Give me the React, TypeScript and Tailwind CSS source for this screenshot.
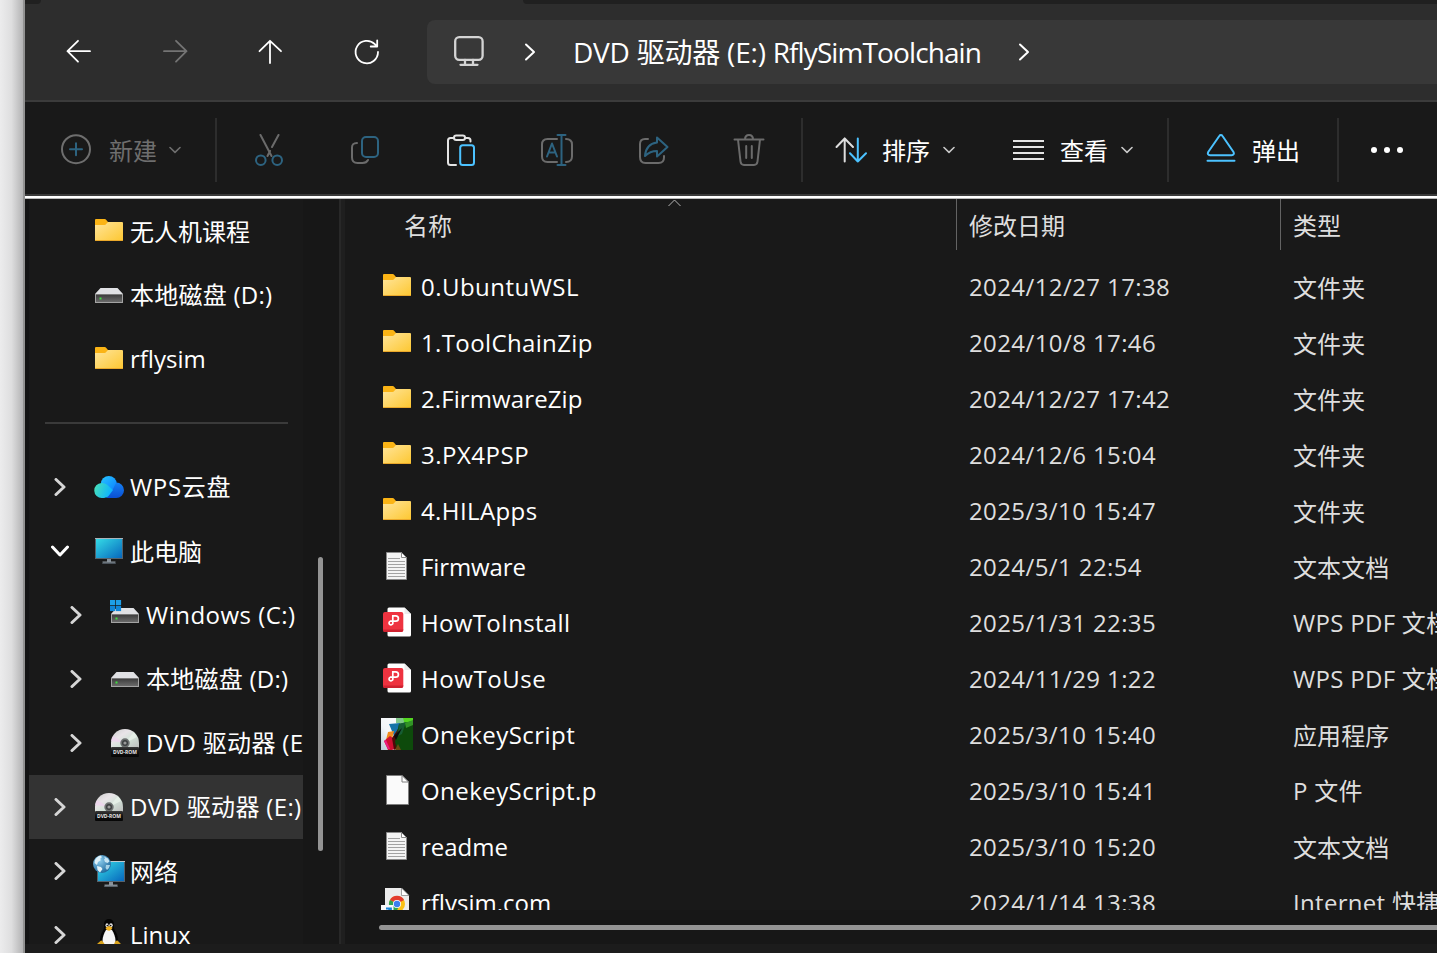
import React from "react";

type IconProps = { className?: string };

const Svg = ({ children, className = "" }: { children: React.ReactNode; className?: string }) => (
  <svg viewBox="0 0 32 32" fill="none" className={`h-8 w-8 shrink-0 ${className}`}>
    {children}
  </svg>
);

/* ---------- file and device icons ---------- */

const FolderIcon = () => (
  <Svg>
    <defs>
      <linearGradient id="folderFront" x1="0" y1="0" x2="1" y2="1">
        <stop offset="0" stopColor="#ffe59b" />
        <stop offset="1" stopColor="#fdc730" />
      </linearGradient>
    </defs>
    <path d="M2 5a1 1 0 0 1 1-1h8.600c.8 0 1.200.3 1.700.9L15 7v4H2z" fill="#fbb415" />
    <path d="M2 10h9.500c.8 0 1.200-.3 1.700-.9L15 7h14a1 1 0 0 1 1 1v17a1 1 0 0 1-1 1H3a1 1 0 0 1-1-1z" fill="url(#folderFront)" />
    <path d="M2 25h28a1 1 0 0 1-1 1H3a1 1 0 0 1-1-1z" fill="#eaa82a" />
  </Svg>
);

const DriveShape = () => (
  <>
    <defs>
      <linearGradient id="driveBody" x1="0" y1="0" x2="0" y2="1">
        <stop offset="0" stopColor="#3c3c3c" />
        <stop offset="1" stopColor="#6a6a6a" />
      </linearGradient>
    </defs>
    <path d="M7.500 9h17L30 15H2z" fill="#e0e1e4" />
    <rect x="2" y="15" width="28" height="9" fill="#a3a3a3" />
    <rect x="3" y="15.600" width="26" height="7.400" fill="url(#driveBody)" />
    <rect x="6.500" y="18.500" width="2" height="2" fill="#3fe03f" />
  </>
);

const DriveIcon = () => (
  <Svg>
    <DriveShape />
  </Svg>
);

const WindowsDriveIcon = () => (
  <Svg>
    <DriveShape />
    <path d="M0 0h13v13H0z" fill="#191919" />
    <path d="M7.500 9h5.500v4H3.800z" fill="#e0e1e4" />
    <g fill="#1d9fe8">
      <rect x="1" y="1" width="5.200" height="5.200" />
      <rect x="6.900" y="1" width="5.200" height="5.200" />
      <rect x="1" y="6.900" width="5.200" height="5.200" fill="#0f86d8" />
      <rect x="6.900" y="6.900" width="5.200" height="5.200" fill="#0f86d8" />
    </g>
  </Svg>
);

const ScreenGradient = () => (
  <defs>
    <linearGradient id="screen" x1="0" y1="0" x2="1" y2="1">
      <stop offset="0" stopColor="#34dbe6" />
      <stop offset="1" stopColor="#0767bd" />
    </linearGradient>
  </defs>
);

const ComputerIcon = () => (
  <Svg>
    <ScreenGradient />
    <rect x="2" y="3" width="28" height="21" fill="#56626b" />
    <rect x="2" y="3" width="28" height="1" fill="#a9b4bb" />
    <rect x="3" y="4" width="26" height="19" fill="url(#screen)" />
    <rect x="14" y="24" width="4" height="3" fill="#87919a" />
    <path d="M10 27h12l1 2H9z" fill="#4b535b" />
    <rect x="9.500" y="26.500" width="13" height="1" fill="#8d979f" />
  </Svg>
);

const NetworkIcon = () => (
  <Svg>
    <ScreenGradient />
    <defs>
      <radialGradient id="globe" cx=".35" cy=".3" r=".75">
        <stop offset="0" stopColor="#8fd0f0" />
        <stop offset="1" stopColor="#1d669b" />
      </radialGradient>
    </defs>
    <rect x="4" y="6" width="28" height="21" fill="#56626b" />
    <rect x="4" y="6" width="28" height="1" fill="#c1c9ce" />
    <rect x="5" y="7" width="26" height="19" fill="url(#screen)" />
    <rect x="16" y="27" width="4" height="3" fill="#87919a" />
    <path d="M12 30h12l1 2H11z" fill="#5b646c" />
    <rect x="11.500" y="29.600" width="13" height="1" fill="#9aa4ab" />
    <circle cx="9" cy="9" r="9" fill="url(#globe)" />
    <path d="M2 5c1.500-2.500 3.500-4 5.500-4.500L9 2 7 4l1 1-3 2-1 3-2.500-2z" fill="#dff1f8" />
    <path d="M11 1.500l4 2 1.500 3-2 1.500-2.500-1-1-2.500 1-1z" fill="#c6e4f2" />
    <path d="M4 11l4 1 1.500 2L7 17.500 4.500 15z" fill="#e5f4fa" />
    <path d="M13 10l4 0-1 3-2 2-1.500-2z" fill="#a6d3e8" />
  </Svg>
);

const DvdIcon = () => (
  <Svg>
    <defs>
      <linearGradient id="disc" x1="0" y1="0" x2="1" y2="1">
        <stop offset="0" stopColor="#c9cbca" />
        <stop offset=".35" stopColor="#e9e4e8" />
        <stop offset=".6" stopColor="#d3e2d8" />
        <stop offset="1" stopColor="#bcbcbc" />
      </linearGradient>
      <linearGradient id="discLabel" x1="0" y1="0" x2="0" y2="1">
        <stop offset="0" stopColor="#3a3a3a" />
        <stop offset=".5" stopColor="#111" />
        <stop offset="1" stopColor="#050505" />
      </linearGradient>
    </defs>
    <path d="M2 21V16a14 14 0 0 1 28 0v5z" fill="url(#disc)" />
    <path d="M16 16 4 9l-2 5z" fill="#edd3ee" opacity=".8" />
    <path d="M16 16 25 5l3 5z" fill="#e9f3ea" opacity=".8" />
    <circle cx="16" cy="16" r="4.700" fill="#6d7070" />
    <circle cx="16" cy="16" r="3" fill="#3c3f40" />
    <circle cx="16" cy="16" r="1.600" fill="#999" />
    <rect x="2" y="20" width="28" height="10" rx="1" fill="url(#discLabel)" />
    <text x="16" y="26.900" fill="#e6e6e6" fontSize="5" fontWeight="700" textAnchor="middle" textLength="24" fontFamily="Open Sans, sans-serif">
      DVD-ROM
    </text>
  </Svg>
);

const CloudIcon = () => (
  <Svg>
    <defs>
      <linearGradient id="cloudTop" x1="0" y1="0" x2="1" y2="1">
        <stop offset="0" stopColor="#27c6ff" />
        <stop offset="1" stopColor="#0a7dff" />
      </linearGradient>
      <linearGradient id="cloudLeft" x1="0" y1="0" x2="1" y2=".3">
        <stop offset="0" stopColor="#4ce3b4" />
        <stop offset="1" stopColor="#0cb4ff" />
      </linearGradient>
      <linearGradient id="cloudRight" x1="0" y1="0" x2="0" y2="1">
        <stop offset="0" stopColor="#1581f4" />
        <stop offset="1" stopColor="#0a4fd3" />
      </linearGradient>
    </defs>
    <circle cx="15.800" cy="13" r="8" fill="url(#cloudTop)" />
    <path d="M23.200 11.400a7.800 7.800 0 0 1 0 15.600H13l7-9z" fill="url(#cloudRight)" />
    <path d="M8.500 12c3 0 5 1.200 6.500 2.600l5 4.500L15.500 25c-1.500 1.500-3.500 2-6.500 2a7.500 7.500 0 0 1-.5-15z" fill="url(#cloudLeft)" />
  </Svg>
);

const PenguinIcon = () => (
  <Svg>
    <path d="M16 0c-3.500 0-5 2.500-5 5.500 0 3 .2 4.500-1.500 7C7.500 15.500 7 19 7 22l2 8h14l2-8c0-3-.5-6.500-2.500-9.500-1.700-2.500-1.500-4-1.500-7C21 2.500 19.500 0 16 0z" fill="#050505" />
    <path d="M13 11c-2 3-3.500 7-3.500 11 0 5 3 8 6.500 8s6.500-3 6.500-8c0-4-1.500-8-3.500-11l-3-1z" fill="#f5f5f5" />
    <ellipse cx="14" cy="6.300" rx="1.500" ry="2" fill="#e8e8e8" />
    <ellipse cx="18" cy="6.300" rx="1.700" ry="2" fill="#e8e8e8" />
    <circle cx="14.300" cy="6.600" r=".8" fill="#111" />
    <circle cx="17.700" cy="6.600" r=".8" fill="#111" />
    <path d="M12.500 9c1.500-1.500 2.500-1.800 3.500-1.800s2.500.6 3.500 1.600c-1 1.700-2 2.900-3.500 2.900S13 10.500 12.500 9z" fill="#f0b223" />
    <path d="M4 25l4-3.500c1.500 0 3.500 3 4.500 5.500L11 31H4zM28 25l-3.500-3.500c-2 0-3 2-3.500 4l1 5.500h6z" fill="#d9a21b" />
  </Svg>
);

const TextFileIcon = () => (
  <Svg>
    <path d="M5.500 2.500h15L25.500 7.500v22h-20z" fill="#f4f4f4" stroke="#8a8a8a" />
    <path d="M20.500 2.500v5h5z" fill="#fff" stroke="#8a8a8a" />
    <path d="M7 8.500h12M7 11.500h17M7 14.500h17M7 17.500h17M7 20.500h17M7 23.500h17M7 26.500h17" stroke="#a2a2a2" />
  </Svg>
);

const BlankFileIcon = () => (
  <Svg>
    <path d="M5.500 1.500h15.500l6.500 6.500v22.500h-22z" fill="#fafafa" stroke="#7d7d7d" />
    <path d="M21 1.500V8h6.500z" fill="#fff" stroke="#7d7d7d" />
  </Svg>
);

const PdfIcon = () => (
  <Svg>
    <path d="M8 1.500h15.500L30 8v21a1.500 1.500 0 0 1-1.500 1.500H8A1.500 1.500 0 0 1 6.500 29V3A1.500 1.500 0 0 1 8 1.500z" fill="#fff" />
    <path d="M23.500 1.500V8H30z" fill="#ececec" />
    <rect x="2" y="6" width="20.300" height="20" rx="2" fill="#ee3340" />
    <path d="M2 23.500V24a2 2 0 0 0 2 2h16.300a2 2 0 0 0 2-2v-.5z" fill="#cf2230" />
    <path d="M11.800 18.200V9.800h2.900a2.700 2.700 0 0 1 0 5.400H9.300a1.900 1.900 0 1 0 2.500 2.200" stroke="#fff" strokeWidth="1.700" />
  </Svg>
);

const ScriptAppIcon = () => (
  <Svg>
    <defs>
      <linearGradient id="appBg" x1="1" y1="0" x2="0" y2="1">
        <stop offset="0" stopColor="#fff" />
        <stop offset=".6" stopColor="#f3f6f9" />
        <stop offset="1" stopColor="#b9c8d6" />
      </linearGradient>
    </defs>
    <rect width="32" height="32" fill="url(#appBg)" />
    <path d="M15 0h17v10L15 5z" fill="#7fc788" />
    <path d="M22 0h10v4l-8 3z" fill="#53d620" />
    <path d="M8 6l11-1 3 9-9 4z" fill="#1673a8" />
    <path d="M7 14l6-1-2 8-6 1z" fill="#f08a1c" />
    <path d="M3 23l6-5 7 5 3 6-8 3H7z" fill="#cf0f30" />
    <path d="M3 23l2-1 4 9H7z" fill="#ee1c82" />
    <path d="M11 20l6-9 5 2-4 16-5 3z" fill="#4d0a08" />
    <path d="M18 6l14-3v29H16l-2-8z" fill="#0d4a0b" />
    <path d="M18 6l7-2-4 12-4 2z" fill="#175c33" />
    <path d="M21 10l-6 12-2-4z" fill="#070b0a" />
    <path d="M24 5l8-3v5l-7 3z" fill="#329326" />
    <path d="M14 32l3-6 3 6z" fill="#6b4a12" />
  </Svg>
);

const WebLinkIcon = () => (
  <Svg>
    <path d="M4 2h16.500L28 9.500V31H4z" fill="#ececec" />
    <path d="M20.500 2v7.500H28z" fill="#fff" stroke="#8a8a8a" strokeWidth=".8" />
    <circle cx="16" cy="18" r="8" fill="#fbc116" />
    <path d="M16 18 9 14a8 8 0 0 1 14-0z" fill="#e33b2e" />
    <path d="M16 18 9 14a8 8 0 0 0 6 12l4-7z" fill="#2ea44f" />
    <circle cx="16" cy="18" r="4" fill="#fff" />
    <circle cx="16" cy="18" r="3.200" fill="#3c7fee" />
    <rect x="0" y="19" width="12.500" height="12" fill="#f7f7f7" />
    <path d="M5 22.500h5v5M9.500 23 4 28" stroke="#1683d8" strokeWidth="1.800" />
  </Svg>
);

/* ---------- navigation bar icons ---------- */

const Stroke = ({ children, className = "" }: { children: React.ReactNode; className?: string }) => (
  <svg
    viewBox="0 0 32 32"
    fill="none"
    stroke="currentColor"
    strokeWidth="2"
    strokeLinecap="round"
    strokeLinejoin="round"
    className={`h-8 w-8 shrink-0 ${className}`}
  >
    {children}
  </svg>
);

const Chevron = ({ className = "" }: IconProps) => (
  <svg viewBox="0 0 12 18" fill="none" stroke="currentColor" strokeLinecap="round" strokeLinejoin="round" className={`h-[18px] w-3 shrink-0 ${className}`}>
    <path d="M2 1.500 10 9 2 16.500" />
  </svg>
);

const SmallDown = ({ className = "" }: IconProps) => (
  <svg viewBox="0 0 12 8" fill="none" stroke="currentColor" strokeWidth="1.600" strokeLinecap="round" strokeLinejoin="round" className={`h-2 w-3 shrink-0 ${className}`}>
    <path d="M1 1.500 6 6.300 11 1.500" />
  </svg>
);

const Divider = ({ className = "" }: IconProps) => <div className={`h-16 w-0.5 shrink-0 bg-[#2d2d2d] ${className}`} />;

const NavigationBar = () => (
  <div className="relative flex h-[102px] items-start border-b-2 border-[#3b3b3b] bg-[#2d2d2d] text-white">
    <div className="absolute top-0 left-0 h-1 w-4 rounded-br-lg bg-[#202020]" />
    <div className="absolute top-0 right-0 left-[498px] h-1 rounded-bl-lg bg-[#202020]" />
    <div className="mt-5 flex h-16 items-center gap-16 pl-[38px]">
      <Stroke>
        <path d="M27 15.200H4.500M15 4.800 4.500 15.200 15 25.700" strokeWidth="1.800" />
      </Stroke>
      <Stroke className="text-[#747474]">
        <path d="M5 15.200h22.500M17 4.800l10.500 10.400L17 25.700" strokeWidth="1.800" />
      </Stroke>
      <Stroke>
        <path d="M15 27V4.800M4.500 15.200 15 4.800 26 15.200" strokeWidth="1.800" />
      </Stroke>
      <Stroke>
        <path d="M27 16a11.200 11.200 0 1 1-3.200-7.800l2 2M26.200 4.500v6h-6.500" strokeWidth="1.800" />
      </Stroke>
    </div>
    <div className="mt-5 ml-[44px] flex h-16 flex-1 items-center rounded-l-lg bg-[#383838] pl-[26px]">
      <Stroke className="text-[#d4d4d4]">
        <rect x="2.200" y="1.200" width="27.400" height="22.600" rx="4" strokeWidth="2.300" />
        <path d="M12 24v4.200M20 24v4.200M7.500 28.800h17" strokeWidth="2.300" />
      </Stroke>
      <Chevron className="ml-[39px] stroke-2" />
      <span className="ml-[37px] w-[409px] text-[28px] leading-[38px] tracking-[-0.22px] whitespace-pre">
        DVD 驱动器 (E:) <span className="tracking-[-0.9px]">RflySimToolchain</span>
      </span>
      <Chevron className="ml-[36px] stroke-2" />
    </div>
  </div>
);

const CommandBar = () => (
  <div className="flex h-[94px] items-center border-b-2 border-[#3a3a3a] bg-[#191919] pt-1 text-2xl leading-8 text-white">
    <div className="flex w-[190px] items-center pl-[35px] text-[#6e6e6e]">
      <Stroke>
        <circle cx="16" cy="15.200" r="14" />
        <path d="M16 9.200v12M10 15.200h12" stroke="#2d6380" />
      </Stroke>
      <span className="mt-0.5 ml-[17px]">新建</span>
      <SmallDown className="ml-3" />
    </div>
    <Divider />
    <div className="flex flex-1 items-center pl-9">
      <Stroke className="text-[#6b6b6b]">
        <path d="M7.500 1l11 21M25.500 1 19 13M17 17l-2.500 5" />
        <circle cx="7.800" cy="26.200" r="4.800" stroke="#2d6380" />
        <circle cx="24.200" cy="26.200" r="4.800" stroke="#2d6380" />
      </Stroke>
      <Stroke className="ml-16 text-[#6b6b6b]">
        <path d="M8 9C4 9.200 3 10.500 3 13.500v10C3 27.500 5 29 8.500 29h5c3 0 4.500-1 5.500-3" />
        <rect x="13" y="3" width="16" height="20" rx="4" stroke="#2d6380" />
      </Stroke>
      <Stroke className="ml-16 text-[#e4e4e4]">
        <path d="M8.500 4H5.500C4 4 3 5 3 6.500v22C3 30 4 31 5.500 31H11M20.500 4h2.500c1.500 0 2.500 1 2.500 2.500v1" />
        <rect x="9" y="1.500" width="11" height="4.500" rx="2.250" />
        <rect x="15.200" y="11.200" width="13.800" height="19.800" rx="2.500" stroke="#4cc2ff" />
      </Stroke>
      <Stroke className="ml-16 text-[#6b6b6b]">
        <path d="M16 5H6.500C3 5 1 7 1 10.500v12C1 26 3 28 6.500 28H16M25 5c4 0 6 2 6 5.500v12c0 3.500-2 5.500-6 5.500" />
        <path d="M20.500 1v30M16.500 1h8M16.500 31h8M6 22.500 11 9.500l5 13M7.500 18.500h7" stroke="#2d6380" />
      </Stroke>
      <Stroke className="ml-16 text-[#6b6b6b]">
        <path d="M11 5H8C4.500 5 3 7 3 10v13c0 4 2 6 5.500 6h13c3.500 0 5.500-2 5.500-5.500V22" />
        <path d="M20 3.500 30.500 13 20 22.500V17c-5 0-8.500 1.500-12 5 .5-7.500 4.500-12.500 12-13.500z" stroke="#2d6380" />
      </Stroke>
      <Stroke className="ml-16 text-[#6b6b6b]">
        <path d="M1.500 5.500h29M5 5.500l2.500 22C7.800 30 9 31 11 31h10c2 0 3.200-1 3.500-3.500l2.500-22M12 5.500C12 2.500 13.500 1 16 1s4 1.500 4 4.500M13.200 12v12M18.800 12v12" />
      </Stroke>
    </div>
    <Divider />
    <div className="flex w-[364px] items-center pl-8">
      <Stroke>
        <path d="M9.700 27.500v-23M1.500 13 9.700 4.500 18 13" stroke="#dedede" />
        <path d="M22.800 4.500v23M15 19.200l7.800 8.300 8.200-8.300" stroke="#4cc2ff" />
      </Stroke>
      <span className="mt-0.5 ml-[15px]">排序</span>
      <SmallDown className="ml-[13px] text-[#c9c9c9]" />
      <Stroke className="ml-[57px] text-[#e4e4e4]">
        <path d="M1 7h31M1 13h31M1 19h31M1 25h31" strokeLinecap="butt" />
      </Stroke>
      <span className="mt-0.5 ml-4">查看</span>
      <SmallDown className="ml-[13px] text-[#c9c9c9]" />
    </div>
    <Divider />
    <div className="flex w-[168px] items-center pl-9">
      <Stroke className="text-[#4cc2ff]">
        <path d="M14.300 2c.8-1.300 2.400-1.300 3.200 0L28.500 18c1 1.800 0 3.300-1.800 3.300H5c-1.800 0-2.800-1.500-1.800-3.300zM2.500 26.800h27" />
      </Stroke>
      <span className="mt-0.5 ml-[15px]">弹出</span>
    </div>
    <Divider />
    <div className="flex w-[98px] justify-start pl-8">
      <svg viewBox="0 0 32 32" fill="#fff" className="h-8 w-8">
        <circle cx="3" cy="16" r="3" />
        <circle cx="16" cy="16" r="3" />
        <circle cx="29" cy="16" r="3" />
      </svg>
    </div>
  </div>
);

/* ---------- side tree ---------- */

type TreeItem = {
  label: string;
  icon: () => React.ReactElement;
  state?: "closed" | "open";
  child?: boolean;
  selected?: boolean;
  tracking?: string;
};

const pinned: TreeItem[] = [
  { label: "无人机课程", icon: FolderIcon, tracking: "pt-px" },
  { label: "本地磁盘 (D:)", icon: DriveIcon, tracking: "tracking-[0.25px]" },
  { label: "rflysim", icon: FolderIcon },
];

const tree: TreeItem[] = [
  { label: "WPS云盘", icon: CloudIcon, state: "closed", tracking: "tracking-[0.7px]" },
  { label: "此电脑", icon: ComputerIcon, state: "open", tracking: "pt-px" },
  { label: "Windows (C:)", icon: WindowsDriveIcon, state: "closed", child: true, tracking: "tracking-[0.48px]" },
  { label: "本地磁盘 (D:)", icon: DriveIcon, state: "closed", child: true, tracking: "tracking-[0.25px]" },
  { label: "DVD 驱动器 (E:)", icon: DvdIcon, state: "closed", child: true, tracking: "tracking-[0.34px]" },
  { label: "DVD 驱动器 (E:)", icon: DvdIcon, state: "closed", selected: true, tracking: "tracking-[0.34px]" },
  { label: "网络", icon: NetworkIcon, state: "closed", tracking: "pt-px" },
  { label: "Linux", icon: PenguinIcon, state: "closed" },
];

const TreeRow = ({ label, icon: Icon, state, child, selected, tracking = "" }: TreeItem) => (
  <div className={`flex h-16 shrink-0 items-center overflow-hidden ${child ? "pl-9" : "pl-5"} ${selected ? "bg-[#333333]" : ""}`}>
    <div className={`flex h-6 w-6 shrink-0 items-center justify-center ${child ? "-ml-px" : "-ml-px"}`}>
      {state === "closed" && <Chevron className="stroke-[3px] text-[#d6d6d6]" />}
      {state === "open" && <Chevron className="rotate-90 stroke-[3px] text-white" />}
    </div>
    <div className="ml-[21px]">
      <Icon />
    </div>
    <span className={`ml-[5px] text-2xl leading-8 whitespace-pre text-white ${tracking}`}>{label}</span>
  </div>
);

const SideTree = () => (
  <div className="flex w-[320px] shrink-0 border-l-4 border-[#141414] bg-[#171717]">
    <div className="flex w-[274px] shrink-0 flex-col overflow-hidden bg-[#191919]">
      {pinned.map((item) => (
        <TreeRow key={item.label} {...item} />
      ))}
      <div className="flex h-16 shrink-0 items-center pr-[15px] pl-4">
        <div className="h-0.5 w-full bg-[#3a3a3a]" />
      </div>
      {tree.map((item, i) => (
        <TreeRow key={i} {...item} />
      ))}
    </div>
    <div className="mt-[358px] ml-[15px] h-[294px] w-[5px] rounded-full bg-[#949494]" />
    <div className="ml-auto w-0.5 bg-[#282828]" />
    <div className="w-[4px] bg-[#1f1f1f]" />
  </div>
);

/* ---------- file list ---------- */

type Entry = { name: string; date: string; type: string; icon: () => React.ReactElement; tracking?: string };

const entries: Entry[] = [
  { name: "0.UbuntuWSL", date: "2024/12/27 17:38", type: "文件夹", icon: FolderIcon, tracking: "tracking-[0.47px]" },
  { name: "1.ToolChainZip", date: "2024/10/8 17:46", type: "文件夹", icon: FolderIcon, tracking: "tracking-[0.37px]" },
  { name: "2.FirmwareZip", date: "2024/12/27 17:42", type: "文件夹", icon: FolderIcon, tracking: "tracking-[0.1px]" },
  { name: "3.PX4PSP", date: "2024/12/6 15:04", type: "文件夹", icon: FolderIcon, tracking: "tracking-[0.5px]" },
  { name: "4.HILApps", date: "2025/3/10 15:47", type: "文件夹", icon: FolderIcon, tracking: "tracking-[0.4px]" },
  { name: "Firmware", date: "2024/5/1 22:54", type: "文本文档", icon: TextFileIcon, tracking: "tracking-[-0.1px]" },
  { name: "HowToInstall", date: "2025/1/31 22:35", type: "WPS PDF 文档", icon: PdfIcon, tracking: "tracking-[0.34px]" },
  { name: "HowToUse", date: "2024/11/29 1:22", type: "WPS PDF 文档", icon: PdfIcon, tracking: "tracking-[0.55px]" },
  { name: "OnekeyScript", date: "2025/3/10 15:40", type: "应用程序", icon: ScriptAppIcon, tracking: "tracking-[0.45px]" },
  { name: "OnekeyScript.p", date: "2025/3/10 15:41", type: "P 文件", icon: BlankFileIcon, tracking: "tracking-[0.44px]" },
  { name: "readme", date: "2025/3/10 15:20", type: "文本文档", icon: TextFileIcon },
  { name: "rflysim.com", date: "2024/1/14 13:38", type: "Internet 快捷方式", icon: WebLinkIcon },
];

const FileList = () => (
  <div className="flex min-w-0 flex-1 flex-col bg-[#191919] text-2xl leading-8 text-[#dedede]">
    <div className="relative flex h-[60px] shrink-0 items-start">
      <svg viewBox="0 0 14 8" fill="none" stroke="#b5b5b5" className="absolute top-0 left-[323px] h-2 w-3.5">
        <path d="M.5 7 6.500 1l6 6" />
      </svg>
      <div className="h-[51px] w-[611px] shrink-0 pt-[11px] pl-[59px]">名称</div>
      <div className="h-[51px] w-[324px] shrink-0 border-l border-[#636363] pt-[11px] pl-3">修改日期</div>
      <div className="h-[51px] flex-1 border-l border-[#636363] pt-[11px] pl-3">类型</div>
    </div>
    <div className="h-[651px] shrink-0 overflow-hidden">
      {entries.map(({ name, date, type, icon: Icon, tracking = "" }) => (
        <div key={name} className="flex h-14 items-center overflow-hidden pl-9 whitespace-pre">
          <div className="mb-0.5">
            <Icon />
          </div>
          <span className={`ml-2 w-[548px] shrink-0 text-white ${tracking}`}>{name}</span>
          <span className="w-[324px] shrink-0 tracking-[0.4px]">{date}</span>
          <span className={/^[A-Z]/.test(type) ? "tracking-[0.3px]" : "pt-px tracking-[0.1px]"}>{type}</span>
        </div>
      ))}
    </div>
    <div className="flex flex-1 items-start bg-[#171717] pt-[15px] pl-[34px]">
      <div className="h-[5px] w-full rounded-l-full bg-[#949494]" />
    </div>
  </div>
);

export default function App() {
  return (
    <div className="flex h-[953px] w-[1437px] overflow-hidden bg-[#191919] font-['Open_Sans','Noto_Sans_CJK_SC',sans-serif]">
      <div className="w-[25px] shrink-0 border-r-2 border-[#929292] bg-linear-to-r from-[#ececed] via-[#dededf] to-[#b4b4b5]" />
      <div className="flex min-w-0 flex-1 flex-col">
        <NavigationBar />
        <CommandBar />
        <div className="h-[3px] shrink-0 border-b border-[#b9b9b9] bg-white" />
        <div className="flex h-[745px] shrink-0 overflow-hidden">
          <SideTree />
          <FileList />
        </div>
        <div className="flex-1 bg-[#1c1c1c]" />
      </div>
    </div>
  );
}
